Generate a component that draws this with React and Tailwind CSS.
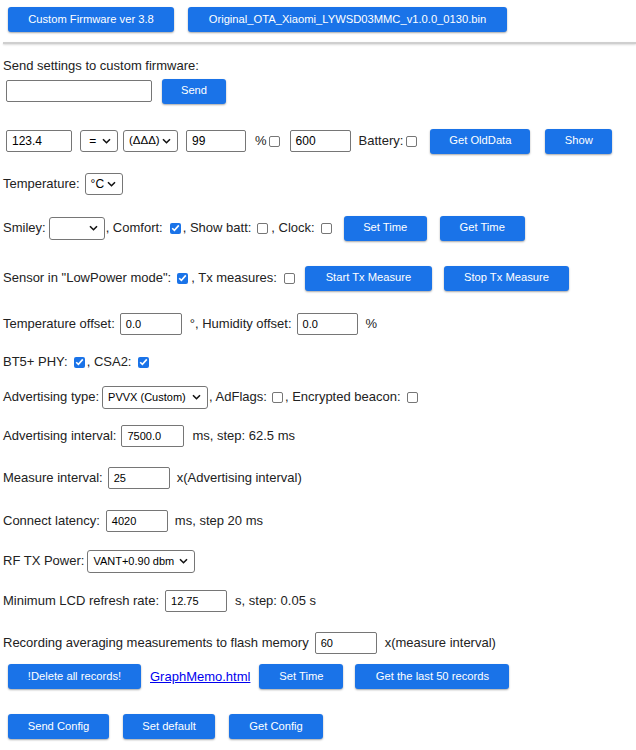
import React from "react";

function Btn({ className = "", children }) {
  return (
    <button
      className={
        "h-[25px] shrink-0 rounded-[3px] bg-[#1a73e8] text-[11.2px] leading-none text-white shadow-[0_1px_2px_rgba(0,0,0,0.35)] " +
        className
      }
    >
      {children}
    </button>
  );
}

function Inp({ className = "", value = "" }) {
  return (
    <div
      className={
        "flex h-[22px] shrink-0 items-center rounded-[2px] border border-[#767676] bg-white pl-[5px] text-[11px] text-black " +
        className
      }
    >
      {value}
    </div>
  );
}

function Sel({ className = "", value = "", textClass = "text-[12px]" }) {
  return (
    <div
      className={
        "flex h-[22px] shrink-0 items-center justify-between rounded-[3px] border border-[#767676] bg-white pl-[5px] pr-[6px] text-black " +
        className
      }
    >
      <span className={"whitespace-pre " + textClass}>{value}</span>
      <svg width="9" height="6" viewBox="0 0 9 6" className="shrink-0">
        <path d="M1 1.2l3.5 3.5 3.5-3.5" fill="none" stroke="#111" strokeWidth="1.6" />
      </svg>
    </div>
  );
}

function Cb({ checked = false, className = "" }) {
  if (checked) {
    return (
      <span
        className={
          "flex h-[11px] w-[11px] shrink-0 items-center justify-center rounded-[2px] bg-[#1a73e8] " + className
        }
      >
        <svg width="9" height="8" viewBox="0 0 9 8">
          <path d="M1.2 4.2l2.2 2.2 4.4-5" fill="none" stroke="#fff" strokeWidth="1.6" />
        </svg>
      </span>
    );
  }
  return (
    <span
      className={
        "block h-[11px] w-[11px] shrink-0 rounded-[2px] border border-[#767676] bg-white " + className
      }
    />
  );
}

export default function App() {
  return (
    <div className="min-h-[750px] w-[636px] overflow-hidden bg-white pl-[3px] font-['Liberation_Sans',Arial,sans-serif] text-[13px] text-[#222]">
      <div className="flex pt-[7px]">
        <Btn className="ml-[5px] w-[166px]">Custom Firmware ver 3.8</Btn>
        <Btn className="ml-[14px] w-[319px]">Original_OTA_Xiaomi_LYWSD03MMC_v1.0.0_0130.bin</Btn>
      </div>

      <div className="mt-[10px] h-[2px] bg-[#cfcfcf] shadow-[0_1px_2px_rgba(0,0,0,0.15)]" />

      <div className="mt-[12px] h-[20px] leading-[20px]">Send settings to custom firmware:</div>

      <div className="mt-[2px] flex h-[26px] items-center">
        <Inp className="ml-[3px] w-[146px]" />
        <Btn className="ml-[10px] w-[64px]">Send</Btn>
      </div>

      <div className="mt-[24px] flex h-[26px] items-center">
        <Inp className="ml-[3px] w-[66px] text-[12px]" value="123.4" />
        <Sel className="ml-[8px] w-[38px]" value=" =" />
        <Sel className="ml-[5px] w-[55px]" value="(ΔΔΔ)" textClass="text-[11.5px]" />
        <Inp className="ml-[8px] w-[60px] text-[12px]" value="99" />
        <span className="ml-[9px]">%</span>
        <Cb className="ml-[2px]" />
        <Inp className="ml-[10px] w-[61px] text-[12px]" value="600" />
        <span className="ml-[8px]">Battery:</span>
        <Cb className="ml-[3px]" />
        <Btn className="ml-[13px] w-[100px]">Get OldData</Btn>
        <Btn className="ml-[15px] w-[67px]">Show</Btn>
      </div>

      <div className="mt-[17px] flex h-[26px] items-center">
        <span>Temperature:</span>
        <Sel className="ml-[5px] w-[38px]" value="°C" />
      </div>

      <div className="mt-[18px] flex h-[26px] items-center">
        <span>Smiley:</span>
        <Sel className="ml-[3px] h-[23px] w-[56px]" value="" />
        <span className="ml-[1px]">, Comfort:</span>
        <Cb checked className="ml-[7px]" />
        <span className="ml-[2px]">, Show batt:</span>
        <Cb className="ml-[6px]" />
        <span className="ml-[3px]">, Clock:</span>
        <Cb className="ml-[6px]" />
        <Btn className="ml-[12px] w-[83px]">Set Time</Btn>
        <Btn className="ml-[13px] w-[85px]">Get Time</Btn>
      </div>

      <div className="mt-[24px] flex h-[26px] items-center">
        <span>Sensor in "LowPower mode":</span>
        <Cb checked className="ml-[6px]" />
        <span className="ml-[3px]">, Tx measures:</span>
        <Cb className="ml-[7px]" />
        <Btn className="ml-[10px] w-[127px]">Start Tx Measure</Btn>
        <Btn className="ml-[12px] w-[125px]">Stop Tx Measure</Btn>
      </div>

      <div className="mt-[20px] flex h-[26px] items-center">
        <span>Temperature offset:</span>
        <Inp className="ml-[5px] w-[62px]" value="0.0" />
        <span className="ml-[8px]">°, Humidity offset:</span>
        <Inp className="ml-[5px] w-[61px]" value="0.0" />
        <span className="ml-[8px]">%</span>
      </div>

      <div className="mt-[12px] flex h-[26px] items-center">
        <span>BT5+ PHY:</span>
        <Cb checked className="ml-[6px]" />
        <span className="ml-[2px]">, CSA2:</span>
        <Cb checked className="ml-[7px]" />
      </div>

      <div className="mt-[9px] flex h-[26px] items-center">
        <span>Advertising type:</span>
        <Sel className="ml-[3px] h-[23px] w-[106px]" value="PVVX (Custom)" textClass="text-[11px]" />
        <span className="ml-[1px]">, AdFlags:</span>
        <Cb className="ml-[5px]" />
        <span className="ml-[2px]">, Encrypted beacon:</span>
        <Cb className="ml-[6px]" />
      </div>

      <div className="mt-[13px] flex h-[26px] items-center">
        <span>Advertising interval:</span>
        <Inp className="ml-[5px] w-[63px]" value="7500.0" />
        <span className="ml-[8px]">ms, step: 62.5 ms</span>
      </div>

      <div className="mt-[16px] flex h-[26px] items-center">
        <span>Measure interval:</span>
        <Inp className="ml-[5px] w-[62px]" value="25" />
        <span className="ml-[7px]">x(Advertising interval)</span>
      </div>

      <div className="mt-[17px] flex h-[26px] items-center">
        <span>Connect latency:</span>
        <Inp className="ml-[6px] w-[62px]" value="4020" />
        <span className="ml-[7px]">ms, step 20 ms</span>
      </div>

      <div className="mt-[14px] flex h-[26px] items-center">
        <span>RF TX Power:</span>
        <Sel className="ml-[3px] h-[23px] w-[108px]" value="VANT+0.90 dbm" textClass="text-[11px]" />
      </div>

      <div className="mt-[14px] flex h-[26px] items-center">
        <span>Minimum LCD refresh rate:</span>
        <Inp className="ml-[6px] w-[62px]" value="12.75" />
        <span className="ml-[8px]">s, step: 0.05 s</span>
      </div>

      <div className="mt-[16px] flex h-[26px] items-center">
        <span>Recording averaging measurements to flash memory</span>
        <Inp className="ml-[6px] w-[62px]" value="60" />
        <span className="ml-[8px]">x(measure interval)</span>
      </div>

      <div className="mt-[8px] flex h-[25px] items-center">
        <Btn className="ml-[5px] w-[133px]">!Delete all records!</Btn>
        <a href="#" className="ml-[9px] text-[#0000ee] underline">GraphMemo.html</a>
        <Btn className="ml-[9px] w-[84px]">Set Time</Btn>
        <Btn className="ml-[12px] w-[154px]">Get the last 50 records</Btn>
      </div>

      <div className="mt-[25px] flex h-[25px] items-center">
        <Btn className="ml-[5px] w-[101px]">Send Config</Btn>
        <Btn className="ml-[14px] w-[92px]">Set default</Btn>
        <Btn className="ml-[14px] w-[94px]">Get Config</Btn>
      </div>
    </div>
  );
}
